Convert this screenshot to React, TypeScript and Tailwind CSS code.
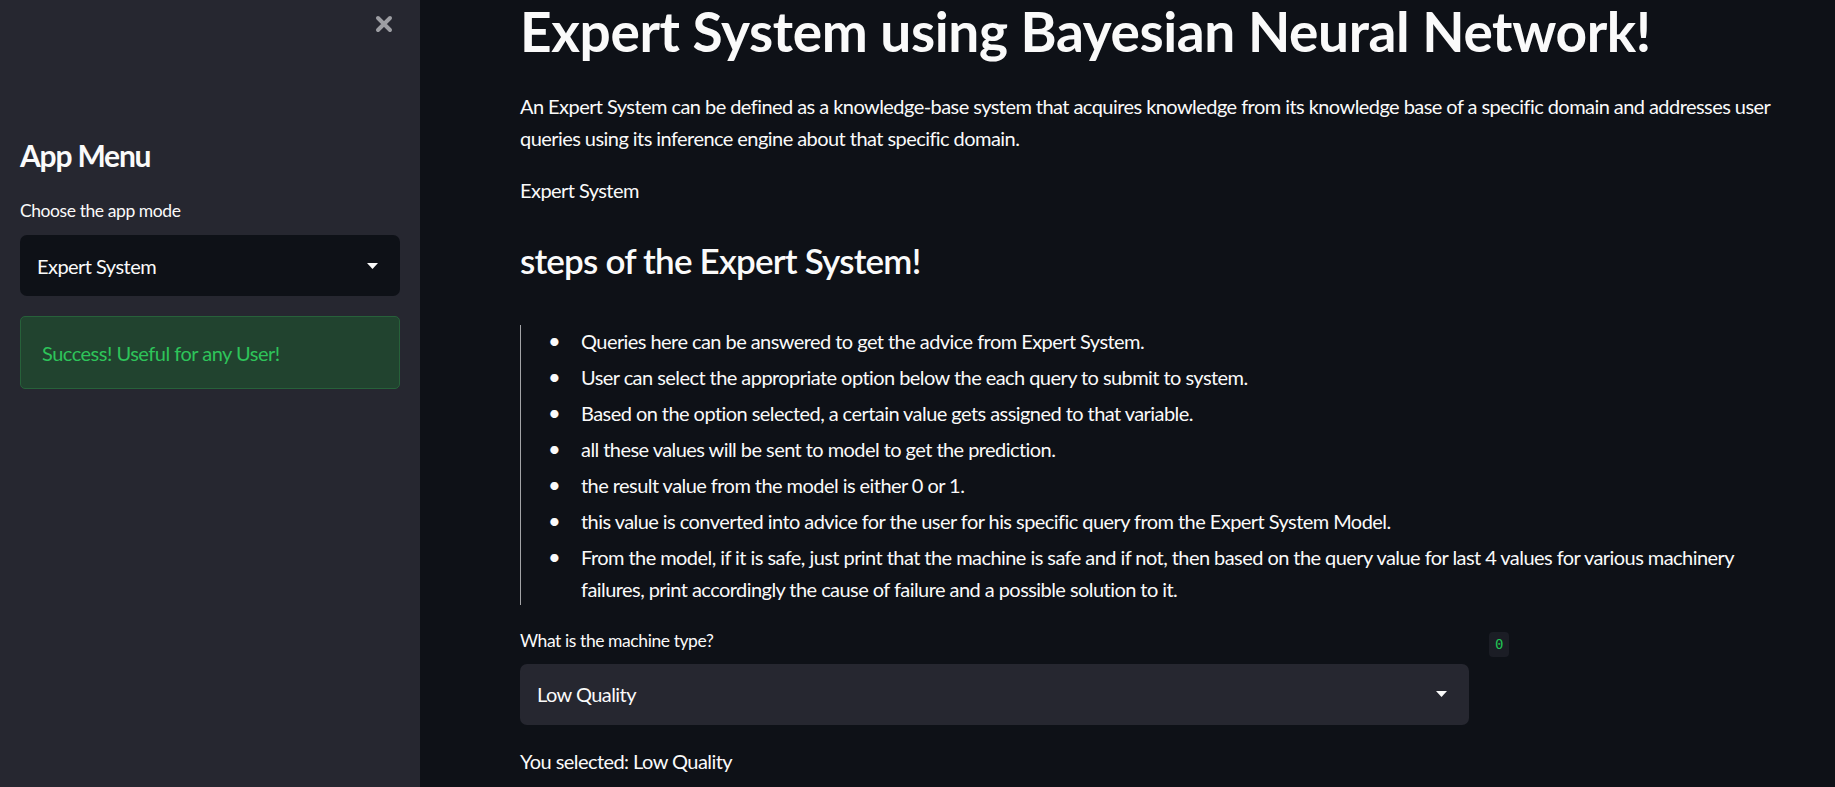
import React from 'react';

const steps = [
  'Queries here can be answered to get the advice from Expert System.',
  'User can select the appropriate option below the each query to submit to system.',
  'Based on the option selected, a certain value gets assigned to that variable.',
  'all these values will be sent to model to get the prediction.',
  'the result value from the model is either 0 or 1.',
  'this value is converted into advice for the user for his specific query from the Expert System Model.',
  'From the model, if it is safe, just print that the machine is safe and if not, then based on the query value for last 4 values for various machinery failures, print accordingly the cause of failure and a possible solution to it.',
];

/** small white caret used by the select boxes */
function Caret() {
  return (
    <svg width="11" height="6" viewBox="0 0 11 6" className="shrink-0">
      <path d="M0 0 H11 L5.5 6 Z" fill="#fafafa" />
    </svg>
  );
}

function Sidebar() {
  return (
    <aside className="w-[420px] shrink-0 bg-[#262730] px-[20px]">
      {/* close button */}
      <div className="flex justify-end pt-[15px] pr-[7px]">
        <svg width="18" height="18" viewBox="0 0 18 18">
          <path d="M3 3 L15 15 M15 3 L3 15" stroke="#9d9ea3" strokeWidth="4" strokeLinecap="round" />
        </svg>
      </div>

      <h1 className="mt-[104px] text-[30px] font-bold leading-[1.2] tracking-[-0.04em] text-[#fafafa]">App Menu</h1>

      <label className="mt-[24px] block text-[17.5px] leading-[28px] tracking-[-0.024em] text-[#fafafa]">
        Choose the app mode
      </label>
      <div className="mt-[10px] flex h-[61px] items-center justify-between rounded-[7px] bg-[#0e1117] pl-[17px] pr-[22px]">
        <span className="text-[20px] tracking-[-0.027em] text-[#fafafa]">Expert System</span>
        <Caret />
      </div>

      <div className="mt-[20px] flex h-[73px] items-center rounded-[5px] border border-[#27613a] bg-[#21432f] pl-[21px]">
        <span className="text-[20px] tracking-[-0.025em] text-[#2ec45a]">Success! Useful for any User!</span>
      </div>
    </aside>
  );
}

export default function App() {
  return (
    <div
      className="flex h-[787px] w-[1835px] overflow-hidden bg-[#0e1117] text-[#fafafa]"
      style={{ fontFamily: '"Source Sans Pro", Lato, "Liberation Sans", sans-serif' }}
    >
      <Sidebar />

      <main className="min-w-0 flex-1 pl-[100px] pr-[36px] text-[20px] leading-[32px] tracking-[-0.028em]">
        <h1 className="pt-[1px] text-[55px] font-bold leading-[1.1] tracking-[-0.007em]">
          Expert System using Bayesian Neural Network!
        </h1>

        <p className="mt-[28px]">
          An Expert System can be defined as a knowledge-base system that acquires knowledge from its knowledge base of a
          specific domain and addresses user queries using its inference engine about that specific domain.
        </p>

        <p className="mt-[20px]">Expert System</p>

        <h3 className="mt-[33px] text-[35px] font-semibold leading-[1.2] tracking-[-0.023em]">
          steps of the Expert System!
        </h3>

        <blockquote className="mt-[44px] border-l border-[#a3a4a7]">
          <ul className="space-y-[4px] pl-[27px]">
            {steps.map((s) => (
              <li key={s} className="flex">
                <span className="w-[33px] shrink-0 text-[22px]">•</span>
                <span>{s}</span>
              </li>
            ))}
          </ul>
        </blockquote>

        <div className="mt-[22px] grid grid-cols-[949px_1fr] gap-[20px]">
          <div>
            <label className="block text-[17.5px] leading-[28px] tracking-[-0.024em]">What is the machine type?</label>
            <div className="mt-[9px] flex h-[61px] items-center justify-between rounded-[7px] bg-[#262730] pl-[17px] pr-[22px]">
              <span>Low Quality</span>
              <Caret />
            </div>
          </div>
          <div className="flex items-start pt-[5px]">
            <span
              className="flex h-[25px] items-center rounded-[4px] bg-[#1b1d25] px-[6px] text-[14px] leading-none tracking-normal text-[#21c354]"
              style={{ fontFamily: '"DejaVu Sans Mono", monospace' }}
            >
              0
            </span>
          </div>
        </div>

        <p className="mt-[20px]">You selected: Low Quality</p>
      </main>
    </div>
  );
}
